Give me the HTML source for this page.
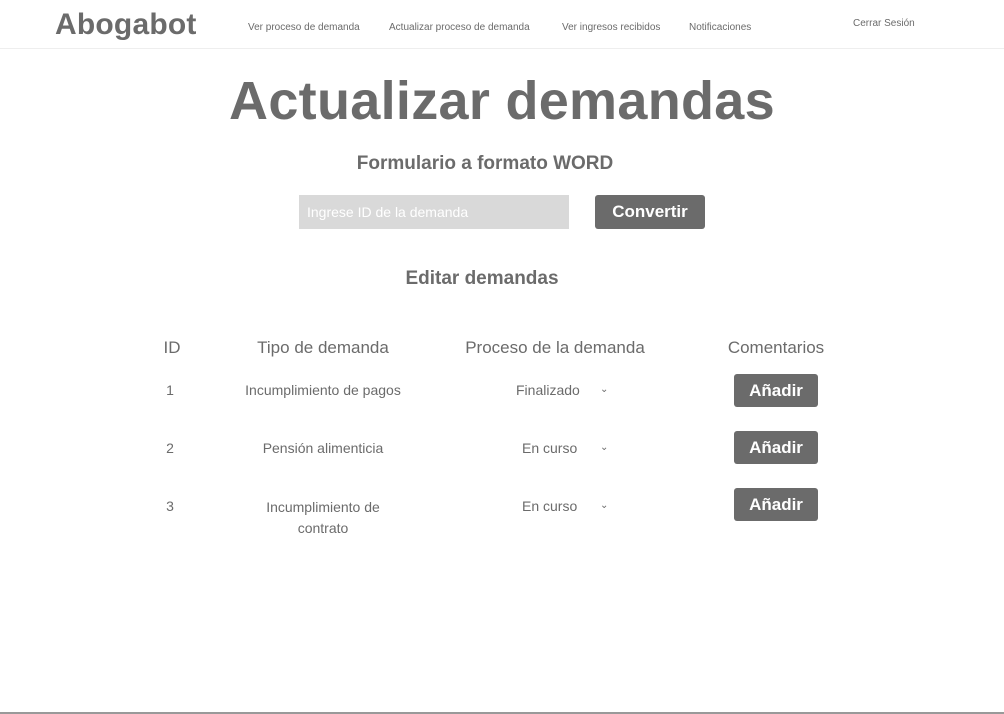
<!DOCTYPE html>
<html><head><meta charset="utf-8"><style>
*{margin:0;padding:0;box-sizing:border-box}
body{width:1004px;height:714px;background:#fff;font-family:"Liberation Sans",sans-serif;color:#6b6b6b;position:relative;overflow:hidden}
.a{position:absolute;white-space:nowrap}
.c{transform:translateX(-50%);text-align:center}
.nav{font-size:10px;top:22px}
.btn{position:absolute;background:#6b6b6b;color:#fff;font-weight:bold;border-radius:3px;display:flex;align-items:center;justify-content:center}
.h{font-size:17px;top:338px}
.r{font-size:14px}
.ch{position:absolute;font-size:10px}
</style></head><body>
<div class="a" style="left:55px;top:8px;font-size:30px;font-weight:bold;letter-spacing:0.2px">Abogabot</div>
<div class="a nav" style="left:248px">Ver proceso de demanda</div>
<div class="a nav" style="left:389px">Actualizar proceso de demanda</div>
<div class="a nav" style="left:562px">Ver ingresos recibidos</div>
<div class="a nav" style="left:689px">Notificaciones</div>
<div class="a nav" style="left:853px;top:18px">Cerrar Sesión</div>
<div class="a" style="left:0;top:48px;width:1004px;height:1px;background:#eee"></div>
<div class="a c" style="left:502px;top:70px;font-size:54px;font-weight:bold;letter-spacing:0.3px">Actualizar demandas</div>
<div class="a c" style="left:485px;top:153px;font-size:19px;font-weight:bold">Formulario a formato WORD</div>
<div class="a" style="left:299px;top:195px;width:270px;height:34px;background:#d9d9d9;color:#fff;font-size:14px;padding:9px 8px">Ingrese ID de la demanda</div>
<div class="btn" style="left:595px;top:195px;width:110px;height:34px;font-size:17px">Convertir</div>
<div class="a c" style="left:482px;top:268px;font-size:19px;font-weight:bold">Editar demandas</div>
<div class="a c h" style="left:172px">ID</div>
<div class="a c h" style="left:323px">Tipo de demanda</div>
<div class="a c h" style="left:555px">Proceso de la demanda</div>
<div class="a c h" style="left:776px">Comentarios</div>
<div class="a c r" style="left:170px;top:382px">1</div>
<div class="a c r" style="left:323px;top:382px">Incumplimiento de pagos</div>
<div class="a r" style="left:516px;top:382px">Finalizado</div><div class="ch" style="left:600px;top:384px">⌄</div>
<div class="btn" style="left:734px;top:374px;width:84px;height:33px;font-size:17px">Añadir</div>
<div class="a c r" style="left:170px;top:440px">2</div>
<div class="a c r" style="left:323px;top:440px">Pensión alimenticia</div>
<div class="a r" style="left:522px;top:440px">En curso</div><div class="ch" style="left:600px;top:442px">⌄</div>
<div class="btn" style="left:734px;top:431px;width:84px;height:33px;font-size:17px">Añadir</div>
<div class="a c r" style="left:170px;top:498px">3</div>
<div class="a c r" style="left:323px;top:497px;line-height:21px">Incumplimiento de<br>contrato</div>
<div class="a r" style="left:522px;top:498px">En curso</div><div class="ch" style="left:600px;top:500px">⌄</div>
<div class="btn" style="left:734px;top:488px;width:84px;height:33px;font-size:17px">Añadir</div>
<div class="a" style="left:0;top:712px;width:1004px;height:2px;background:#999"></div>
</body></html>
